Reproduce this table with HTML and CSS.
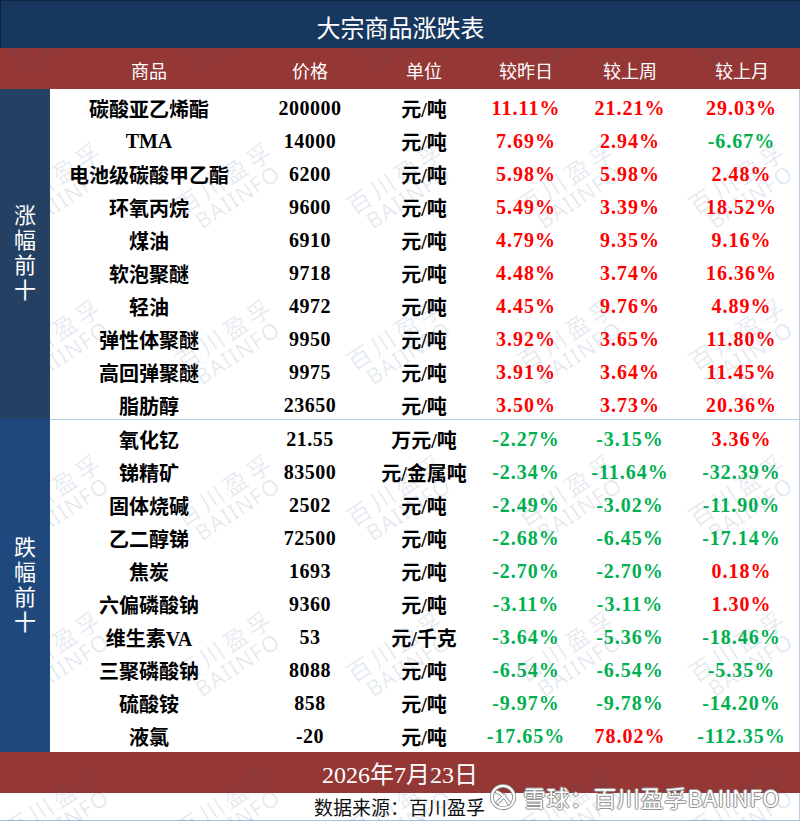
FILE: index.html
```html
<!DOCTYPE html>
<html lang="zh">
<head>
<meta charset="utf-8">
<title>大宗商品涨跌表</title>
<link rel="stylesheet" href="styles.css">
</head>
<body>
<div class="sheet">
  <div class="title">大宗商品涨跌表</div>
  <div class="head">
    <span></span><span>商品</span><span>价格</span><span>单位</span><span>较昨日</span><span>较上周</span><span>较上月</span>
  </div>

  <div class="group group-up">
    <div class="side">涨幅前十</div>
    <div class="rows">
      <div class="row"><span>碳酸亚乙烯酯</span><span class="n">200000</span><span>元/吨</span><span class="p r">11.11%</span><span class="p r">21.21%</span><span class="p r">29.03%</span></div>
      <div class="row"><span>TMA</span><span class="n">14000</span><span>元/吨</span><span class="p r">7.69%</span><span class="p r">2.94%</span><span class="p g">-6.67%</span></div>
      <div class="row"><span>电池级碳酸甲乙酯</span><span class="n">6200</span><span>元/吨</span><span class="p r">5.98%</span><span class="p r">5.98%</span><span class="p r">2.48%</span></div>
      <div class="row"><span>环氧丙烷</span><span class="n">9600</span><span>元/吨</span><span class="p r">5.49%</span><span class="p r">3.39%</span><span class="p r">18.52%</span></div>
      <div class="row"><span>煤油</span><span class="n">6910</span><span>元/吨</span><span class="p r">4.79%</span><span class="p r">9.35%</span><span class="p r">9.16%</span></div>
      <div class="row"><span>软泡聚醚</span><span class="n">9718</span><span>元/吨</span><span class="p r">4.48%</span><span class="p r">3.74%</span><span class="p r">16.36%</span></div>
      <div class="row"><span>轻油</span><span class="n">4972</span><span>元/吨</span><span class="p r">4.45%</span><span class="p r">9.76%</span><span class="p r">4.89%</span></div>
      <div class="row"><span>弹性体聚醚</span><span class="n">9950</span><span>元/吨</span><span class="p r">3.92%</span><span class="p r">3.65%</span><span class="p r">11.80%</span></div>
      <div class="row"><span>高回弹聚醚</span><span class="n">9975</span><span>元/吨</span><span class="p r">3.91%</span><span class="p r">3.64%</span><span class="p r">11.45%</span></div>
      <div class="row"><span>脂肪醇</span><span class="n">23650</span><span>元/吨</span><span class="p r">3.50%</span><span class="p r">3.73%</span><span class="p r">20.36%</span></div>
    </div>
  </div>

  <div class="group group-down">
    <div class="side">跌幅前十</div>
    <div class="rows">
      <div class="row"><span>氧化钇</span><span class="n">21.55</span><span>万元/吨</span><span class="p g">-2.27%</span><span class="p g">-3.15%</span><span class="p r">3.36%</span></div>
      <div class="row"><span>锑精矿</span><span class="n">83500</span><span>元/金属吨</span><span class="p g">-2.34%</span><span class="p g">-11.64%</span><span class="p g">-32.39%</span></div>
      <div class="row"><span>固体烧碱</span><span class="n">2502</span><span>元/吨</span><span class="p g">-2.49%</span><span class="p g">-3.02%</span><span class="p g">-11.90%</span></div>
      <div class="row"><span>乙二醇锑</span><span class="n">72500</span><span>元/吨</span><span class="p g">-2.68%</span><span class="p g">-6.45%</span><span class="p g">-17.14%</span></div>
      <div class="row"><span>焦炭</span><span class="n">1693</span><span>元/吨</span><span class="p g">-2.70%</span><span class="p g">-2.70%</span><span class="p r">0.18%</span></div>
      <div class="row"><span>六偏磷酸钠</span><span class="n">9360</span><span>元/吨</span><span class="p g">-3.11%</span><span class="p g">-3.11%</span><span class="p r">1.30%</span></div>
      <div class="row"><span>维生素VA</span><span class="n">53</span><span>元/千克</span><span class="p g">-3.64%</span><span class="p g">-5.36%</span><span class="p g">-18.46%</span></div>
      <div class="row"><span>三聚磷酸钠</span><span class="n">8088</span><span>元/吨</span><span class="p g">-6.54%</span><span class="p g">-6.54%</span><span class="p g">-5.35%</span></div>
      <div class="row"><span>硫酸铵</span><span class="n">858</span><span>元/吨</span><span class="p g">-9.97%</span><span class="p g">-9.78%</span><span class="p g">-14.20%</span></div>
      <div class="row"><span>液氯</span><span class="n">-20</span><span>元/吨</span><span class="p g">-17.65%</span><span class="p r">78.02%</span><span class="p g">-112.35%</span></div>
    </div>
  </div>

  <div class="date">2026年7月23日</div>
  <div class="source">数据来源：百川盈孚</div>

  <div class="marks">
    <div class="wm"><b>百川盈孚</b><i>BAIINFO</i></div>
    <div class="wm"><b>百川盈孚</b><i>BAIINFO</i></div>
    <div class="wm"><b>百川盈孚</b><i>BAIINFO</i></div>
    <div class="wm"><b>百川盈孚</b><i>BAIINFO</i></div>
    <div class="wm"><b>百川盈孚</b><i>BAIINFO</i></div>
    <div class="wm"><b>百川盈孚</b><i>BAIINFO</i></div>
    <div class="wm"><b>百川盈孚</b><i>BAIINFO</i></div>
    <div class="wm"><b>百川盈孚</b><i>BAIINFO</i></div>
    <div class="wm"><b>百川盈孚</b><i>BAIINFO</i></div>
    <div class="wm"><b>百川盈孚</b><i>BAIINFO</i></div>
    <div class="wm"><b>百川盈孚</b><i>BAIINFO</i></div>
    <div class="wm"><b>百川盈孚</b><i>BAIINFO</i></div>
    <div class="wm"><b>百川盈孚</b><i>BAIINFO</i></div>
    <div class="wm"><b>百川盈孚</b><i>BAIINFO</i></div>
    <div class="wm"><b>百川盈孚</b><i>BAIINFO</i></div>
    <div class="wm"><b>百川盈孚</b><i>BAIINFO</i></div>
    <div class="wm"><b>百川盈孚</b><i>BAIINFO</i></div>
    <div class="wm"><b>百川盈孚</b><i>BAIINFO</i></div>
    <div class="wm"><b>百川盈孚</b><i>BAIINFO</i></div>
    <div class="wm"><b>百川盈孚</b><i>BAIINFO</i></div>
    <div class="wm"><b>百川盈孚</b><i>BAIINFO</i></div>
    <div class="wm"><b>百川盈孚</b><i>BAIINFO</i></div>
    <div class="wm"><b>百川盈孚</b><i>BAIINFO</i></div>
    <div class="wm"><b>百川盈孚</b><i>BAIINFO</i></div>
    <div class="wm"><b>百川盈孚</b><i>BAIINFO</i></div>
    <div class="wm"><b>百川盈孚</b><i>BAIINFO</i></div>
    <div class="wm"><b>百川盈孚</b><i>BAIINFO</i></div>
    <div class="wm"><b>百川盈孚</b><i>BAIINFO</i></div>
    <div class="wm"><b>百川盈孚</b><i>BAIINFO</i></div>
    <div class="wm"><b>百川盈孚</b><i>BAIINFO</i></div>
  </div>

  <div class="xq">
    <svg class="xq-logo" viewBox="0 0 30 30" width="28" height="28" aria-hidden="true">
      <circle cx="15" cy="15" r="12" fill="none" stroke="#8a8a8a" stroke-width="4.2"/>
      <circle cx="15" cy="15" r="12" fill="none" stroke="#fff" stroke-width="2.4"/>
      <path d="M8.5 9.5 C13 10.5 17 15 21.5 21.5" fill="none" stroke="#8a8a8a" stroke-width="4.2" stroke-linecap="round"/>
      <path d="M9 21 L16.5 13.5" fill="none" stroke="#8a8a8a" stroke-width="4.2" stroke-linecap="round"/>
      <path d="M8.5 9.5 C13 10.5 17 15 21.5 21.5" fill="none" stroke="#fff" stroke-width="2.4" stroke-linecap="round"/>
      <path d="M9 21 L16.5 13.5" fill="none" stroke="#fff" stroke-width="2.4" stroke-linecap="round"/>
    </svg>
    <span class="xq-text">雪球：百川盈孚BAIINFO</span>
  </div>
</div>
</body>
</html>
```

FILE: styles.css
```css
* { box-sizing: border-box; }

html, body {
  margin: 0;
  padding: 0;
  background: #ffffff;
}

.sheet {
  position: relative;
  width: 800px;
  height: 821px;
  overflow: hidden;
  font-family: "Liberation Serif", "Noto Sans CJK SC", serif;
}

.title {
  position: relative;
  z-index: 2;
  height: 48px;
  padding-top: 3px;
  background: #17375e;
  border-top: 1px solid #0e2540;
  border-left: 1px solid #0e2540;
  color: #ffffff;
  font-family: "Noto Sans CJK SC", sans-serif;
  font-weight: 400;
  font-size: 24px;
  display: flex;
  align-items: center;
  justify-content: center;
}

.head {
  height: 41px;
  padding-top: 3px;
  background: #953735;
  color: #ffffff;
  font-family: "Noto Sans CJK SC", sans-serif;
  font-size: 18px;
  font-weight: 400;
  display: grid;
  grid-template-columns: 50px 198px 124px 104px 100px 108px 1fr;
  align-items: center;
  text-align: center;
}

.group {
  display: flex;
}

.side {
  width: 50px;
  flex: none;
  display: flex;
  align-items: center;
  justify-content: center;
  color: #ffffff;
  font-family: "Noto Sans CJK SC", sans-serif;
  font-size: 22px;
  font-weight: 400;
  writing-mode: vertical-rl;
  text-orientation: upright;
  letter-spacing: 3px;
}

.group-up .side { background: #244062; }
.group-down .side { background: #1f497d; }

.rows {
  flex: 1;
  border-right: 1px solid #b8cce4;
}

.group-down .rows {
  border-top: 1px solid #b8cce4;
  padding-bottom: 2px;
}

.row {
  height: 33px;
  padding-top: 5px;
  display: grid;
  grid-template-columns: 198px 124px 104px 100px 108px 1fr;
  align-items: center;
  text-align: center;
  font-size: 20px;
  font-weight: 700;
  color: #000000;
  white-space: nowrap;
}

.row .n { letter-spacing: 0.5px; }
.row .p { letter-spacing: 1px; }
.row .r { color: #ff0000; }
.row .g { color: #00b050; }

.date {
  height: 41px;
  background: #953735;
  color: #ffffff;
  font-size: 24px;
  font-weight: 400;
  display: flex;
  align-items: center;
  justify-content: center;
}

.source {
  height: 28px;
  border-right: 1px solid #b8cce4;
  border-bottom: 1px solid #9dc3e6;
  color: #111111;
  font-family: "Noto Sans CJK SC", sans-serif;
  font-size: 19px;
  display: flex;
  align-items: center;
  justify-content: center;
}

/* watermark overlay */
.marks {
  position: absolute;
  z-index: 1;
  left: -26px;
  top: -48px;
  display: grid;
  grid-template-columns: repeat(5, 171px);
  grid-auto-rows: 156px;
  pointer-events: none;
}

.wm {
  display: flex;
  flex-direction: column;
  align-items: center;
  justify-content: center;
  transform: rotate(-33deg);
  color: rgba(40, 85, 140, 0.12);
  line-height: 1.05;
}

.wm b {
  font-family: "Noto Sans CJK SC", sans-serif;
  font-weight: 400;
  font-size: 24px;
  letter-spacing: 4px;
}

.wm i {
  font-family: "Noto Sans", sans-serif;
  font-style: normal;
  font-weight: 400;
  font-size: 22px;
  letter-spacing: 1px;
}

/* xueqiu watermark */
.xq {
  position: absolute;
  z-index: 3;
  left: 489px;
  top: 780px;
  display: flex;
  align-items: center;
  gap: 6px;
  pointer-events: none;
}

.xq-text {
  font-family: "Noto Sans CJK SC", sans-serif;
  font-size: 23px;
  font-weight: 400;
  color: #ffffff;
  letter-spacing: 0.5px;
  text-shadow: 0 0 1px #777, 1px 0 0 #999, -1px 0 0 #999, 0 1px 0 #999, 0 -1px 0 #999;
}
```
